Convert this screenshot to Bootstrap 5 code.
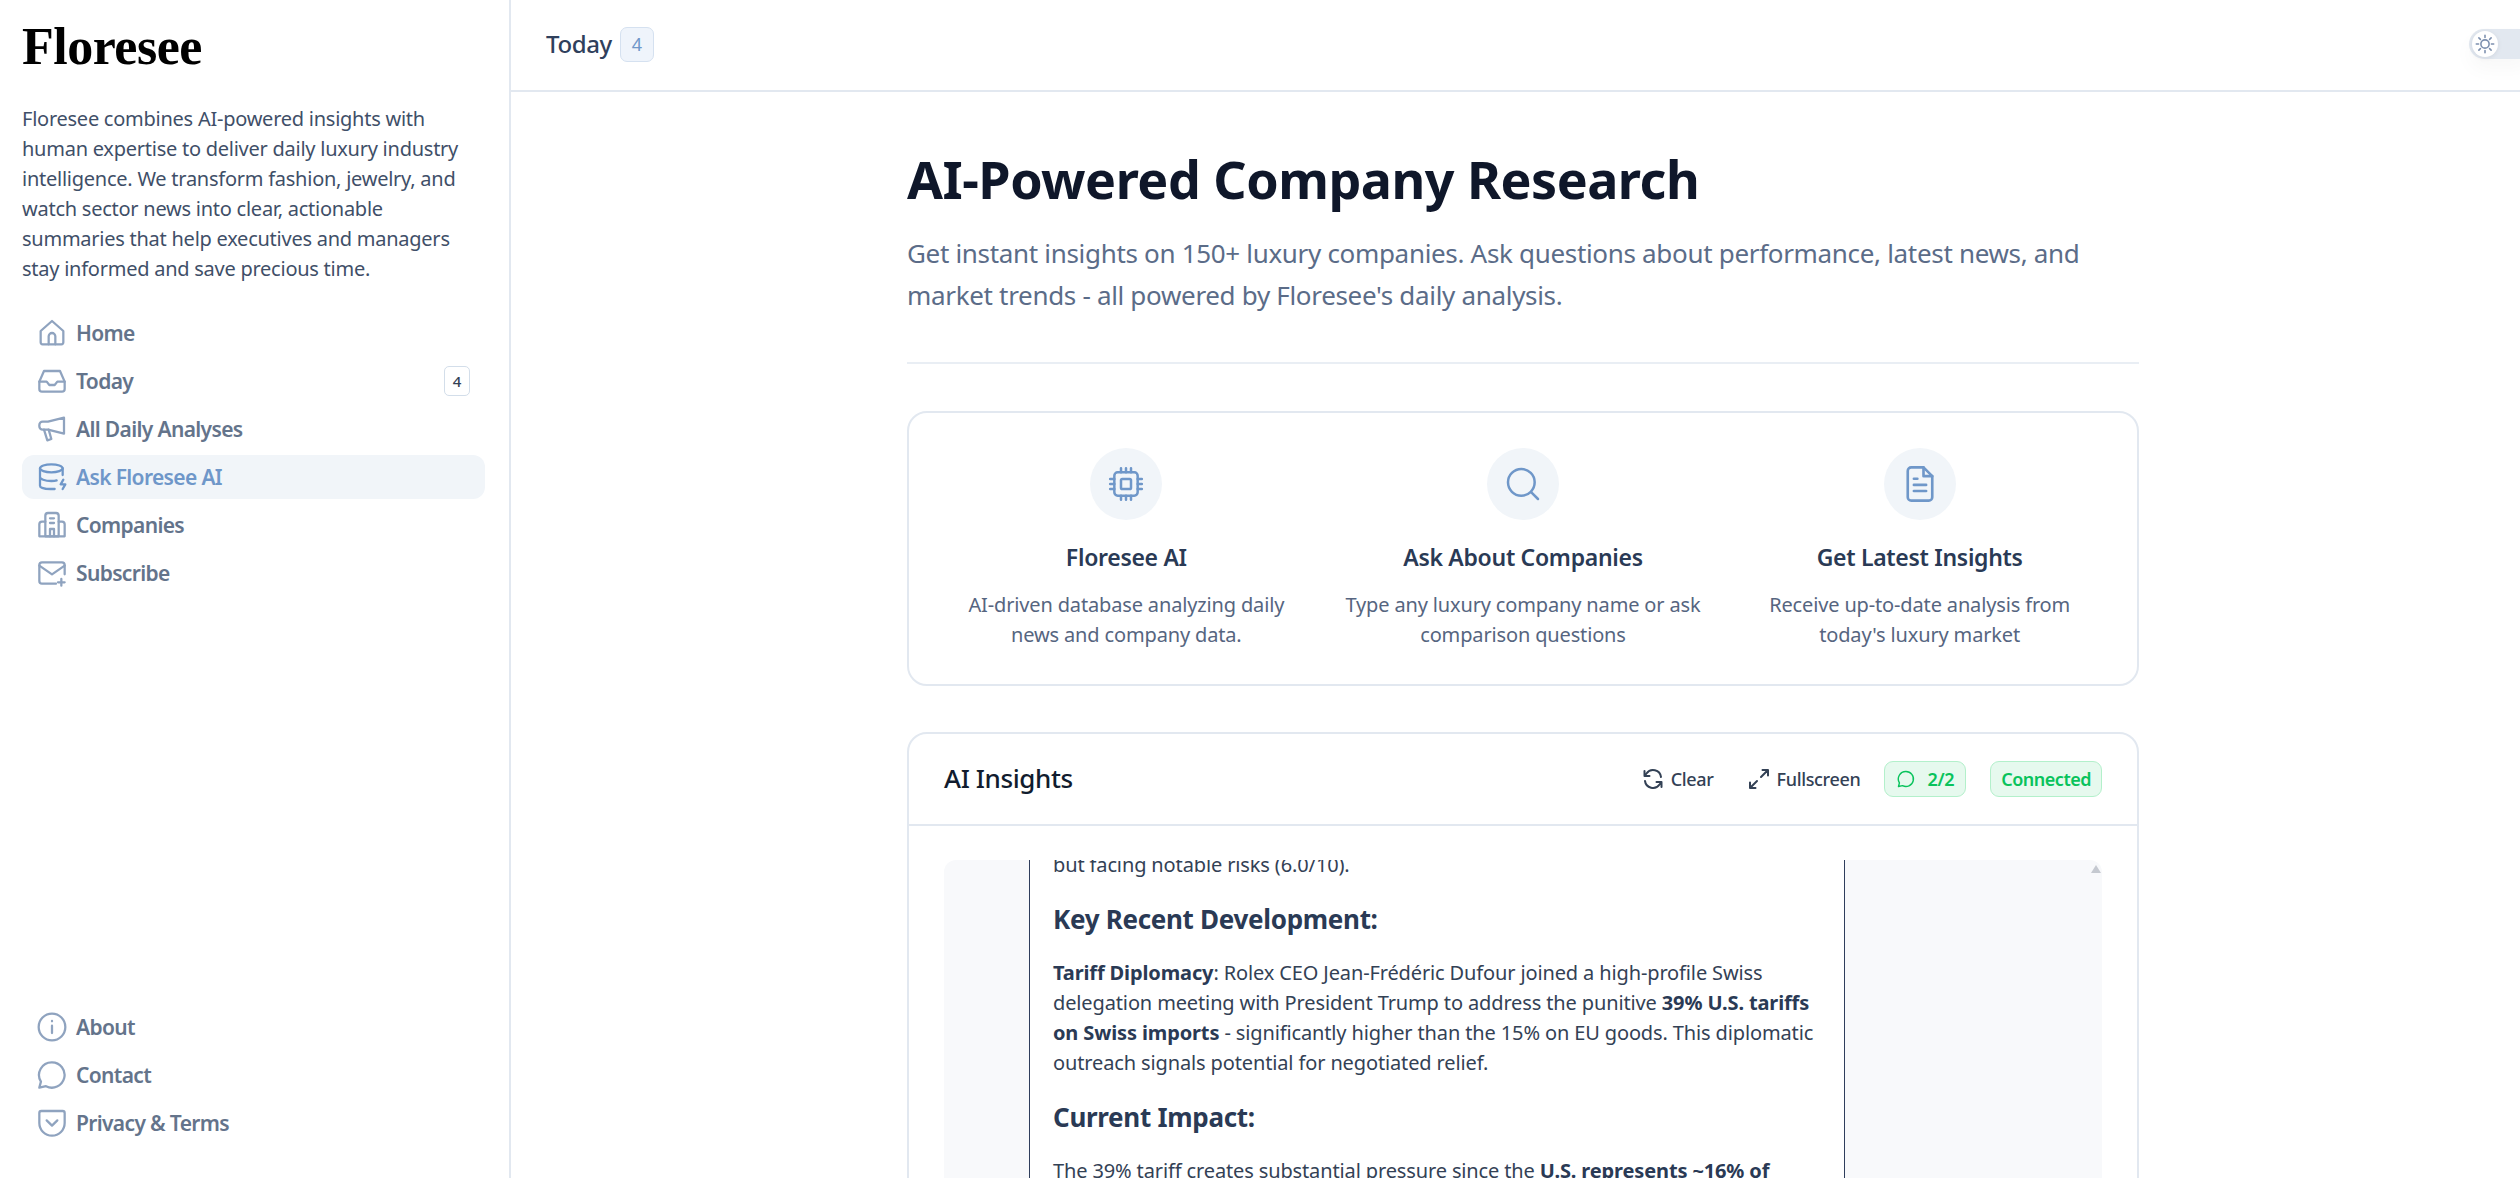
<!DOCTYPE html>
<html lang="en">
<head>
    <meta charset="utf-8">
    <title>Ask Floresee AI</title>
    <link rel="stylesheet" href="https://cdn.jsdelivr.net/npm/bootstrap@5.3.0/dist/css/bootstrap.min.css">
    <style>
        html, body { height: 100%; overflow: hidden; }
        body { font-family: "Noto Sans", "Liberation Sans", sans-serif; font-size: 20px; line-height: 30px; letter-spacing: -.25px; color: #334155; background: #fff; }
        svg.ico { fill: none; stroke: currentColor; stroke-width: 1.7; stroke-linecap: round; stroke-linejoin: round; flex-shrink: 0; }

        .side-col { width: 511px; flex-shrink: 0; border-right: 2px solid #e2e8f0; padding: 0 24px 0 22px; }
        .side-logo { font-family: "Liberation Serif", serif; font-weight: 700; font-size: 52px; line-height: 52px; color: #000; padding-top: 21px; letter-spacing: -.5px; }
        .side-intro { margin: 31px 0 27px; color: #3f4f68; }
        .side-link { height: 44px; padding: 0 14px; border-radius: 12px; font-size: 21px; font-weight: 600; letter-spacing: -.65px; color: #64748b; gap: 8px; text-decoration: none; }
        .side-link svg { color: #8fa3bf; }
        .side-link.is-on { background: #f1f5f9; color: #6f97c9; }
        .side-link.is-on svg { color: #6f97c9; }
        .side-count { width: 26px; height: 30px; margin-right: 1px; border: 1.5px solid #d3deea; border-radius: 5px; font-size: 15px; font-weight: 500; letter-spacing: 0; color: #334155; }
        .side-foot { padding-bottom: 33px; }

        .top-row { height: 92px; border-bottom: 2px solid #e2e8f0; padding: 0 0 2px 35px; }
        .top-title { font-size: 24px; font-weight: 500; letter-spacing: -.4px; color: #2f405c; }
        .top-count { width: 34px; height: 35px; border: 1.5px solid #d5e1f0; border-radius: 7px; background: #eff4fb; color: #6f97c9; font-size: 18px; }
        .mode-track { width: 60px; height: 30px; margin-right: -9px; border-radius: 15px 0 0 15px; background: #e2e8f0; padding-left: 3px; box-shadow: 0 10px 20px rgba(15,23,42,.03); }
        .mode-knob { width: 26px; height: 26px; border-radius: 50%; background: #fff; color: #7c8fae; box-shadow: 0 1px 5px rgba(15,23,42,.08); }

        .page-wrap { width: 1232px; margin-left: 396px; padding-top: 54px; }
        .hero-title { font-size: 52px; line-height: 66px; font-weight: 700; letter-spacing: -.5px; color: #0f172a; margin: 0 0 20px; }
        .hero-sub { font-size: 26px; line-height: 42px; letter-spacing: -.32px; color: #5b6c88; margin: 0; }
        .hero-line { margin: 46px 0 47px; border: 0; border-top: 2px solid #e9eef4; opacity: 1; }

        .soft-box { border: 2px solid #e2e8f0; border-radius: 20px; }
        .feat-box { height: 275px; padding: 35px 19px 0; margin-bottom: 46px; }
        .feat-dot { width: 72px; height: 72px; border-radius: 50%; background: #f1f5f9; color: #6f97c9; }
        .feat-dot svg.ico { stroke-width: 1.5; }
        .feat-name { font-size: 23px; line-height: 32px; font-weight: 600; letter-spacing: -.3px; color: #2a3a55; margin: 21px 0 17px; }
        .feat-text { color: #566580; margin: 0; padding: 0 16px; letter-spacing: -.15px; }

        .chat-box { height: 800px; }
        .chat-top { height: 92px; padding: 0 35px; border-bottom: 2px solid #e2e8f0; }
        .chat-name { font-size: 26px; font-weight: 500; letter-spacing: -.4px; color: #111c2e; margin: 0; }
        .chat-act { font-size: 18px; font-weight: 500; letter-spacing: -.35px; color: #334155; gap: 6px; }
        .chat-act svg.ico { stroke-width: 2; }
        .chat-act-gap { margin-right: 33px; }
        .chat-pill { height: 36px; padding: 0 10px; border: 1.5px solid #b3f0cb; border-radius: 9px; background: #e6f9ee; color: #09c35c; font-size: 18px; font-weight: 600; letter-spacing: -.5px; }
        .chat-pill-msg { gap: 11px; padding: 0 11px; letter-spacing: -.3px; }
        .chat-scroll { height: 600px; margin: 34px 35px 0; background: #f8f9fb; border-radius: 12px; padding-left: 85px; position: relative; overflow: hidden; }
        .chat-arrow { position: absolute; top: 5px; right: 1px; border: 5px solid transparent; border-top: 0; border-bottom: 8px solid #c5c9d0; }
        .chat-msg { width: 816px; height: 100%; background: #fff; border-left: 1px solid #2f3e5c; border-right: 1px solid #2f3e5c; padding: 0 12px 0 23px; color: #334155; letter-spacing: -.13px; }
        .chat-msg p { margin: 0 0 16px; }
        .chat-msg .clip-line { margin-top: -10px; }
        .chat-msg h3 { font-size: 26px; line-height: 36px; font-weight: 700; letter-spacing: -.3px; color: #2a3a55; margin: 21px 0 21px; }
        .chat-msg strong { font-weight: 700; color: #2a3a55; }
    </style>
</head>
<body>
<div class="d-flex h-100">
    <!-- Sidebar -->
    <aside class="side-col d-flex flex-column h-100">
        <div class="side-logo">Floresee</div>
        <p class="side-intro">Floresee combines AI-powered insights with human expertise to deliver daily luxury industry intelligence. We transform fashion, jewelry, and watch sector news into clear, actionable summaries that help executives and managers stay informed and save precious time.</p>
        <nav class="d-flex flex-column gap-1">
            <a class="side-link d-flex align-items-center" href="#">
                <svg class="ico" width="32" height="32" viewBox="0 0 24 24"><path d="M3.5 10.5 12 3l8.5 7.5V19a1.5 1.5 0 0 1-1.5 1.5H5A1.5 1.5 0 0 1 3.5 19z"/><path d="M9.5 20.5V14.5a2.5 2.5 0 0 1 5 0v6"/></svg>Home</a>
            <a class="side-link d-flex align-items-center" href="#">
                <svg class="ico" width="32" height="32" viewBox="0 0 24 24"><path d="M6 4.5h12l3.5 8v5.5a2 2 0 0 1-2 2h-15a2 2 0 0 1-2-2v-5.5z"/><path d="M2.5 12.5h5.5l2 2.5h4l2-2.5h5.5"/></svg>Today<span class="side-count d-flex align-items-center justify-content-center ms-auto">4</span></a>
            <a class="side-link d-flex align-items-center" href="#">
                <svg class="ico" width="32" height="32" viewBox="0 0 24 24"><path d="M21 3.5v12L9 12.500H5a2.5 2.5 0 0 1-2.5-2.5V9A2.5 2.5 0 0 1 5 6.5h4z"/><path d="M6 12.500l2.5 8 3-1-2-7"/></svg>All Daily Analyses</a>
            <a class="side-link is-on d-flex align-items-center" href="#">
                <svg class="ico" width="32" height="32" viewBox="0 0 24 24"><ellipse cx="11.5" cy="5.5" rx="8.5" ry="3"/><path d="M3 5.5v13c0 1.5 3.5 2.5 8 2.5h3M20 5.5v5M3 12c0 1.5 3.5 3 8.5 3 1.5 0 3-.1 4-.5"/><path d="M20.5 14l-2 3.5h3.5l-2 3.5"/></svg>Ask Floresee AI</a>
            <a class="side-link d-flex align-items-center" href="#">
                <svg class="ico" width="32" height="32" viewBox="0 0 24 24"><path d="M7 20.5V5a2 2 0 0 1 2-2h6a2 2 0 0 1 2 2v15.5z"/><path d="M7 9.5H4.5a2 2 0 0 0-2 2v9h19v-9a2 2 0 0 0-2-2H17"/><path d="M10.5 7h3M10.5 10.5h3M10.5 20.5V15h3v5.5"/></svg>Companies</a>
            <a class="side-link d-flex align-items-center" href="#">
                <svg class="ico" width="32" height="32" viewBox="0 0 24 24"><path d="M21.5 13V6a2 2 0 0 0-2-2h-15a2 2 0 0 0-2 2v12a2 2 0 0 0 2 2H15"/><path d="M2.5 6.5 12 13l9.5-6.5M19 16.5v5M16.5 19h5"/></svg>Subscribe</a>
        </nav>
        <nav class="side-foot d-flex flex-column gap-1 mt-auto">
            <a class="side-link d-flex align-items-center" href="#">
                <svg class="ico" width="32" height="32" viewBox="0 0 24 24"><circle cx="12" cy="12" r="10"/><path d="M12 11v5.5M12 7.5v.2"/></svg>About</a>
            <a class="side-link d-flex align-items-center" href="#">
                <svg class="ico" width="32" height="32" viewBox="0 0 24 24"><path d="M12 2.5a9.5 9.5 0 1 1-4.5 17.900L2.5 21.5l1.200-4.500A9.5 9.5 0 0 1 12 2.5z"/></svg>Contact</a>
            <a class="side-link d-flex align-items-center" href="#">
                <svg class="ico" width="32" height="32" viewBox="0 0 24 24"><path d="M4 3h16a1.5 1.5 0 0 1 1.5 1.5V12a9.5 9.5 0 0 1-19 0V4.5A1.5 1.5 0 0 1 4 3z"/><path d="m8 10 4 4 4-4"/></svg>Privacy &amp; Terms</a>
        </nav>
    </aside>

    <!-- Main -->
    <div class="flex-grow-1 d-flex flex-column h-100 overflow-hidden">
        <header class="top-row d-flex align-items-center flex-shrink-0">
            <span class="top-title me-2">Today</span>
            <span class="top-count d-flex align-items-center justify-content-center">4</span>
            <div class="mode-track d-flex align-items-center ms-auto">
                <span class="mode-knob d-flex align-items-center justify-content-center">
                    <svg class="ico" width="22" height="22" viewBox="0 0 24 24"><circle cx="12" cy="12" r="4.5"/><path d="M12 2.5V5M12 19v2.5M2.5 12H5M19 12h2.5M5.3 5.3 7 7M17 17l1.700 1.700M5.3 18.700 7 17M17 7l1.700-1.700"/></svg>
                </span>
            </div>
        </header>

        <main class="page-wrap">
            <h1 class="hero-title">AI-Powered Company Research</h1>
            <p class="hero-sub">Get instant insights on 150+ luxury companies. Ask questions about performance, latest news, and market trends - all powered by Floresee's daily analysis.</p>
            <hr class="hero-line">

            <section class="soft-box feat-box">
                <div class="row g-0 text-center">
                    <div class="col-4">
                        <div class="feat-dot d-flex align-items-center justify-content-center mx-auto">
                            <svg class="ico" width="40" height="40" viewBox="0 0 24 24"><rect x="5" y="5" width="14" height="14" rx="2"/><rect x="9" y="9" width="6" height="6" rx=".8"/><path d="M9 2.5V5M12 2.5V5M15 2.5V5M9 19v2.5M12 19v2.5M15 19v2.5M2.5 9H5M2.5 12H5M2.5 15H5M19 9h2.5M19 12h2.5M19 15h2.5"/></svg>
                        </div>
                        <h5 class="feat-name">Floresee AI</h5>
                        <p class="feat-text">AI-driven database analyzing daily news and company data.</p>
                    </div>
                    <div class="col-4">
                        <div class="feat-dot d-flex align-items-center justify-content-center mx-auto">
                            <svg class="ico" width="40" height="40" viewBox="0 0 24 24"><circle cx="11" cy="11" r="8"/><path d="m17 17 4 4"/></svg>
                        </div>
                        <h5 class="feat-name">Ask About Companies</h5>
                        <p class="feat-text">Type any luxury company name or ask comparison questions</p>
                    </div>
                    <div class="col-4">
                        <div class="feat-dot d-flex align-items-center justify-content-center mx-auto">
                            <svg class="ico" width="42" height="42" viewBox="0 0 24 24"><path d="M14 2.5H7a2 2 0 0 0-2 2v15a2 2 0 0 0 2 2h10a2 2 0 0 0 2-2V7.5z"/><path d="M14 2.5v5h5M8.5 12.5h7M8.5 16h7M8.5 9h2"/></svg>
                        </div>
                        <h5 class="feat-name">Get Latest Insights</h5>
                        <p class="feat-text">Receive up-to-date analysis from today's luxury market</p>
                    </div>
                </div>
            </section>

            <section class="soft-box chat-box">
                <div class="chat-top d-flex align-items-center">
                    <h4 class="chat-name me-auto">AI Insights</h4>
                    <span class="chat-act chat-act-gap d-flex align-items-center">
                        <svg class="ico" width="24" height="24" viewBox="0 0 24 24"><path d="M20 10a8 8 0 0 0-14.5-3.5L3.5 9M3.5 4v5h5M4 14a8 8 0 0 0 14.5 3.5l2-2.5M20.5 20v-5h-5"/></svg>Clear</span>
                    <span class="chat-act d-flex align-items-center me-4">
                        <svg class="ico" width="24" height="24" viewBox="0 0 24 24"><path d="M14 10l7-7M15.5 3H21v5.5M10 14l-7 7M3 15.5V21h5.5"/></svg>Fullscreen</span>
                    <span class="chat-pill chat-pill-msg d-flex align-items-center me-4">
                        <svg class="ico" width="20" height="20" viewBox="0 0 24 24"><path d="M12 3a9 9 0 1 1-4.200 17L3 21l1.100-4.300A9 9 0 0 1 12 3z"/></svg>2/2</span>
                    <span class="chat-pill d-flex align-items-center">Connected</span>
                </div>
                <div class="chat-scroll">
                    <span class="chat-arrow"></span>
                    <div class="chat-msg">
                        <p class="clip-line">but facing notable risks (6.0/10).</p>
                        <h3>Key Recent Development:</h3>
                        <p><strong>Tariff Diplomacy</strong>: Rolex CEO Jean-Frédéric Dufour joined a high-profile Swiss delegation meeting with President Trump to address the punitive <strong>39% U.S. tariffs on Swiss imports</strong> - significantly higher than the 15% on EU goods. This diplomatic outreach signals potential for negotiated relief.</p>
                        <h3>Current Impact:</h3>
                        <p>The 39% tariff creates substantial pressure since the <strong>U.S. represents ~16% of</strong></p>
                    </div>
                </div>
            </section>
        </main>
    </div>
</div>
<script src="https://cdn.jsdelivr.net/npm/bootstrap@5.3.0/dist/js/bootstrap.bundle.min.js"></script>
</body>
</html>
